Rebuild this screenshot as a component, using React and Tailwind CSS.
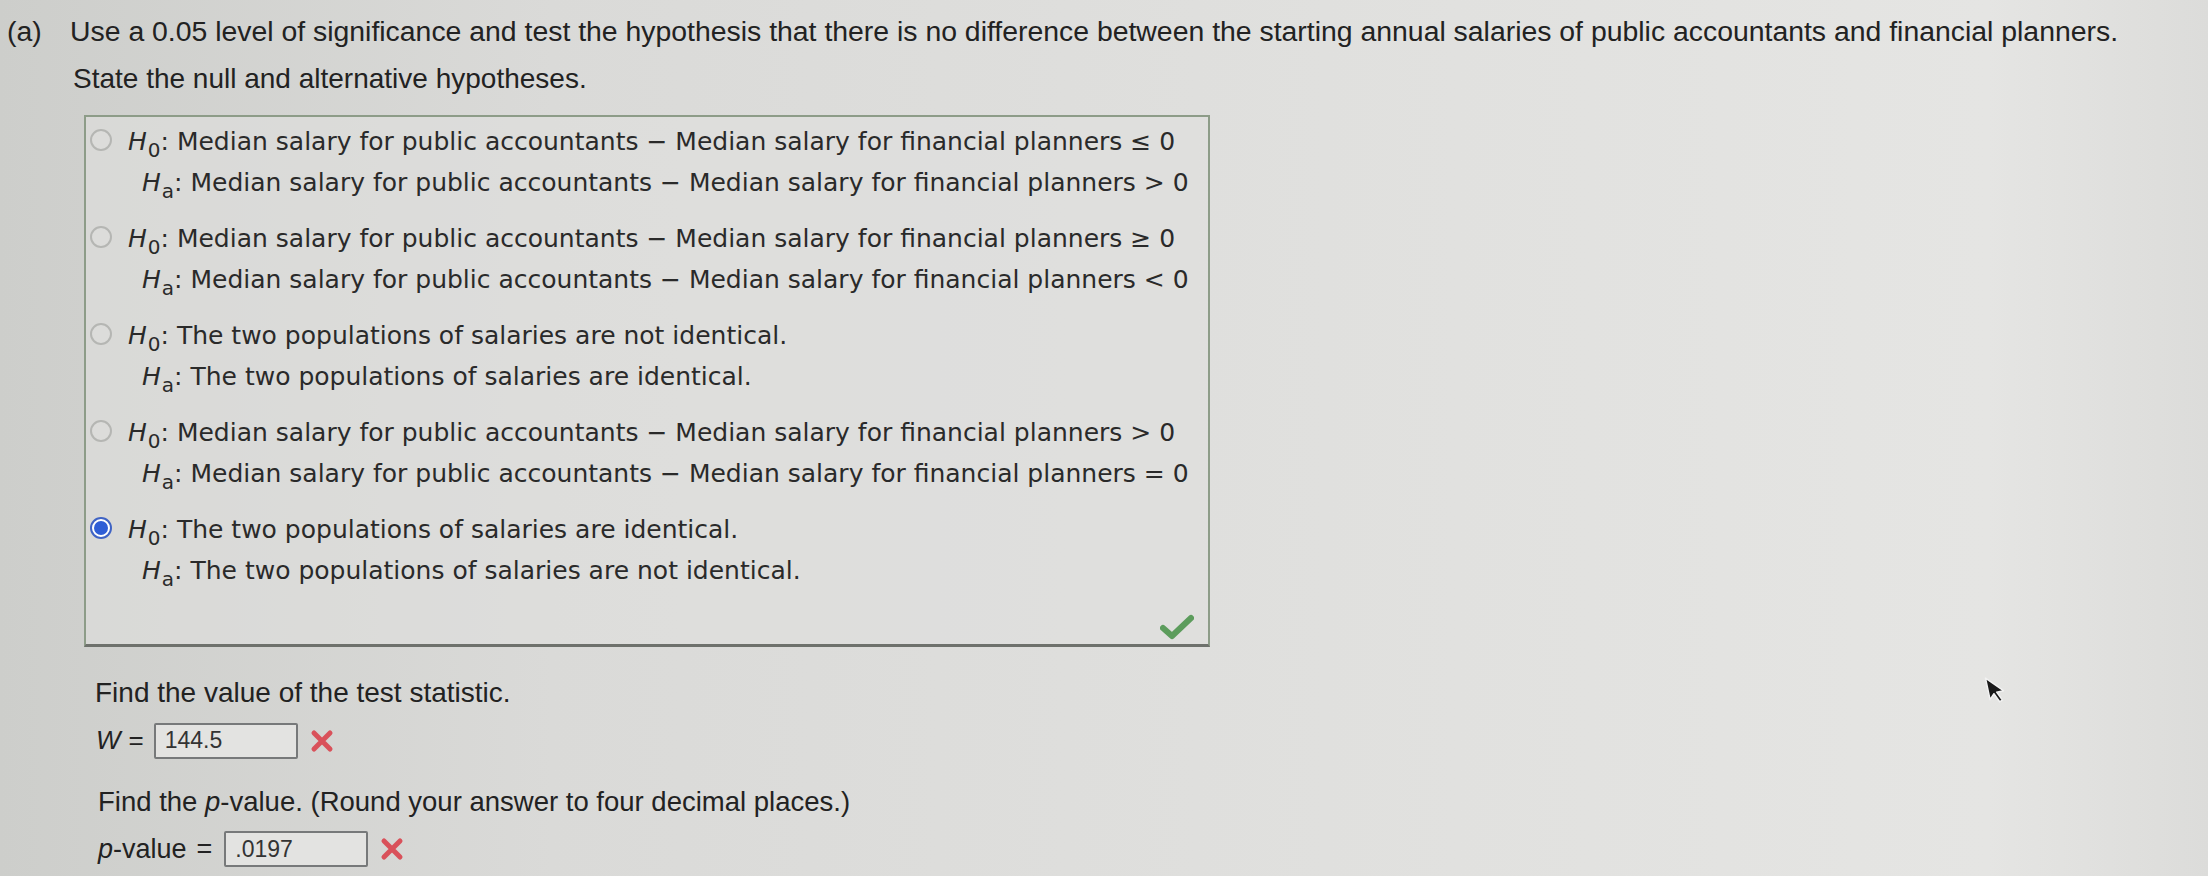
import React from 'react';

// Opções de hipóteses exibidas no cartão de múltipla escolha
const options = [
  {
    h0: 'Median salary for public accountants \u2212 Median salary for financial planners \u2264 0',
    ha: 'Median salary for public accountants \u2212 Median salary for financial planners > 0',
  },
  {
    h0: 'Median salary for public accountants \u2212 Median salary for financial planners \u2265 0',
    ha: 'Median salary for public accountants \u2212 Median salary for financial planners < 0',
  },
  {
    h0: 'The two populations of salaries are not identical.',
    ha: 'The two populations of salaries are identical.',
  },
  {
    h0: 'Median salary for public accountants \u2212 Median salary for financial planners > 0',
    ha: 'Median salary for public accountants \u2212 Median salary for financial planners = 0',
  },
  {
    h0: 'The two populations of salaries are identical.',
    ha: 'The two populations of salaries are not identical.',
    selected: true,
  },
];

const Hyp = ({ sub, children }) => (
  <span>
    <span className="italic">H</span>
    <span className="inline-block text-[20px] leading-[20px] relative top-[7px] ml-[1px]">{sub}</span>: {children}
  </span>
);

const Radio = ({ selected }) =>
  selected ? (
    <span className="mt-[8px] w-[22px] h-[22px] rounded-full border-2 border-[#3f63c4] bg-white flex items-center justify-center shrink-0">
      <span className="w-[14px] h-[14px] rounded-full bg-[#2f5ed6]" />
    </span>
  ) : (
    <span className="mt-[8px] w-[22px] h-[22px] rounded-full border-2 border-[#b5b6b3] bg-[#dcdcda] shrink-0" />
  );

const RedX = () => (
  <svg width="24" height="24" viewBox="0 0 24 24" className="ml-[12px]">
    <path d="M4 4 L20 20 M20 4 L4 20" stroke="#d9515a" strokeWidth="5" strokeLinecap="round" />
  </svg>
);

const App = () => {
  return (
    <div className="relative w-[2208px] h-[876px] overflow-hidden bg-[linear-gradient(90deg,#cdcecb_0%,#dadad8_25%,#e0e0de_60%,#e5e5e3_90%,#dcdcda_100%)] text-[#222] font-['Liberation_Sans',Arial,sans-serif]">
      {/* Enunciado */}
      <div className="flex pt-[14px] text-[28.4px] leading-[34px]">
        <span className="w-[70px] pl-[7px]">(a)</span>
        <span>
          Use a 0.05 level of significance and test the hypothesis that there is no difference between the starting annual salaries of public accountants and financial planners.
        </span>
      </div>

      <div className="pl-[73px] mt-[14px] text-[28px] leading-[34px]">State the null and alternative hypotheses.</div>

      {/* Cartão de opções */}
      <div className="relative ml-[84px] mt-[19px] w-[1126px] h-[532px] border-[2px] border-[#8d9c88] border-b-[3px] border-b-[#6e716c] bg-[#dfe0dd]/60 pl-[4px] pt-[4px] font-['DejaVu_Sans',Verdana,sans-serif] text-[25px] leading-[41px] text-[#2a2a2a]">
        <div className="flex flex-col gap-[15px]">
          {options.map((opt, i) => (
            <div key={i} className="flex items-start">
              <Radio selected={opt.selected} />
              <div className="ml-[16px]">
                <div>
                  <Hyp sub="0">{opt.h0}</Hyp>
                </div>
                <div className="pl-[14px]">
                  <Hyp sub="a">{opt.ha}</Hyp>
                </div>
              </div>
            </div>
          ))}
        </div>
        <svg width="34" height="26" viewBox="0 0 34 26" className="absolute right-[14px] bottom-[4px]">
          <path d="M3 14 L12 22 L31 4" fill="none" stroke="#5c9c5c" strokeWidth="6" strokeLinejoin="round" strokeLinecap="round" />
        </svg>
      </div>

      {/* Estatística de teste */}
      <div className="pl-[95px] mt-[29px] text-[28px] leading-[34px]">Find the value of the test statistic.</div>
      <div className="flex items-center pl-[96px] mt-[11px] text-[26px]">
        <span className="italic">W</span>
        <span className="ml-[8px]">=</span>
        <div className="ml-[10px] w-[144px] h-[36px] border-2 border-[#77797a] rounded-[2px] bg-[#e3e3e1] flex items-center pl-[9px] text-[23px] text-[#333]">
          144.5
        </div>
        <RedX />
      </div>

      <div className="pl-[98px] mt-[25px] text-[27.5px] leading-[34px]">
        Find the <span className="italic">p</span>-value. (Round your answer to four decimal places.)
      </div>
      <div className="flex items-center pl-[98px] mt-[10px] text-[27px]">
        <span>
          <span className="italic">p</span>-value
        </span>
        <span className="ml-[10px]">=</span>
        <div className="ml-[12px] w-[144px] h-[36px] border-2 border-[#77797a] rounded-[2px] bg-[#e3e3e1] flex items-center pl-[9px] text-[23px] text-[#333]">
          .0197
        </div>
        <RedX />
      </div>

      {/* Cursor do mouse */}
      <svg width="22" height="30" viewBox="0 0 22 30" className="absolute left-[1986px] top-[674px] rotate-[-12deg]">
        <path d="M2 2 L2 24 L7 19 L11 28 L14 27 L10 18 L17 18 Z" fill="#1a1a1a" stroke="#f2f2f2" strokeWidth="1.5" strokeLinejoin="round" />
      </svg>
    </div>
  );
};

export default App;
